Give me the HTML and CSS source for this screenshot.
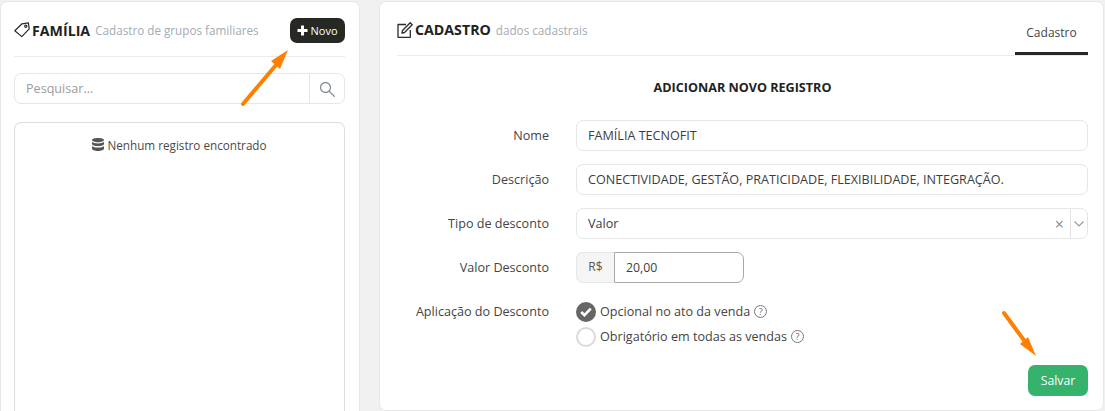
FILE: index.html
```html
<!DOCTYPE html>
<html lang="en">
<head>
    <meta charset="UTF-8">
    <meta name="viewport" content="width=device-width, initial-scale=1.0">
    <title>Cadastro de Família</title>
    <link rel="stylesheet" href="styles.css">
</head>
<body>
    <div class="page">
        <section class="card card-left">
            <header class="card-head">
                <svg class="head-icon tag-icon" width="16" height="16" viewBox="0 0 16 16" fill="none" stroke="#2a2a2a" stroke-width="1.200" stroke-linejoin="round"><path d="M.8 8.800 8 1.800l6.400-1 .8 6L7.800 14.600z"/><circle cx="11.800" cy="4.200" r="1.100"/></svg>
                <h1 class="head-title">FAMÍLIA</h1>
                <span class="head-sub">Cadastro de grupos familiares</span>
                <button class="btn-new" type="button">
                    <svg width="11" height="11" viewBox="0 0 11 11" fill="#fff"><path d="M4 .5h3V4h3.500v3H7v3.500H4V7H.5V4H4z"/></svg>
                    Novo
                </button>
            </header>
            <div class="search">
                <span class="search-text">Pesquisar...</span>
                <span class="search-btn">
                    <svg width="16" height="16" viewBox="0 0 16 16" fill="none" stroke="#8a8f94" stroke-width="1.300"><circle cx="6.500" cy="6.500" r="5"/><path d="m10.200 10.200 5 5" stroke-linecap="round"/></svg>
                </span>
            </div>
            <div class="list-box">
                <p class="empty">
                    <svg width="12" height="14" viewBox="0 0 12 14" fill="#555"><path d="M6 0c3.300 0 6 .9 6 2s-2.700 2.200-6 2.200S0 3.100 0 2s2.700-2 6-2z"/><path d="M0 3.800C1 5 3.500 5.500 6 5.500s5-.5 6-1.700V6c0 1.100-2.700 2.100-6 2.100S0 7.100 0 6z"/><path d="M0 8C1 9.100 3.500 9.600 6 9.600S11 9.100 12 8v2.800c0 1.200-2.700 2.200-6 2.200s-6-1-6-2.200z"/></svg>
                    Nenhum registro encontrado
                </p>
            </div>
        </section>

        <section class="card card-right">
            <header class="card-head card-head-tabs">
                <svg class="head-icon" width="16" height="16" viewBox="0 0 16 16" fill="none" stroke="#2a2a2a" stroke-width="1.300" stroke-linejoin="round"><path d="M9 2.500H1v12.800h12.300V8"/><path d="m5.500 8.500 7.700-7.700 2 2-7.700 7.700-2.500.5z"/></svg>
                <h2 class="head-title">CADASTRO</h2>
                <span class="head-sub">dados cadastrais</span>
                <span class="tab">Cadastro</span>
            </header>
            <h3 class="form-title">ADICIONAR NOVO REGISTRO</h3>
            <form class="form">
                <label class="form-label">Nome</label>
                <div class="field">FAMÍLIA TECNOFIT</div>

                <label class="form-label">Descrição</label>
                <div class="field">CONECTIVIDADE, GESTÃO, PRATICIDADE, FLEXIBILIDADE, INTEGRAÇÃO.</div>

                <label class="form-label">Tipo de desconto</label>
                <div class="field field-select">
                    <span class="select-value">Valor</span>
                    <span class="select-clear">×</span>
                    <span class="select-arrow">
                        <svg width="10" height="6" viewBox="0 0 10 6" fill="none" stroke="#999" stroke-width="1.200"><path d="m.5.500 4.500 4.500L9.500.5"/></svg>
                    </span>
                </div>

                <label class="form-label">Valor Desconto</label>
                <div class="money">
                    <span class="money-prefix">R$</span>
                    <span class="money-input">20,00</span>
                </div>

                <label class="form-label">Aplicação do Desconto</label>
                <div class="radios">
                    <div class="radio-row">
                        <span class="radio radio-on">
                            <svg width="12" height="10" viewBox="0 0 12 10" fill="none" stroke="#fff" stroke-width="2.600"><path d="m1.200 5 3.200 3.200 6.400-6.600"/></svg>
                        </span>
                        Opcional no ato da venda
                        <span class="help">?</span>
                    </div>
                    <div class="radio-row">
                        <span class="radio"></span>
                        Obrigatório em todas as vendas
                        <span class="help">?</span>
                    </div>
                </div>
            </form>
            <div class="actions">
                <button class="btn-save" type="button">Salvar</button>
            </div>
        </section>
    </div>

    <!-- setas de anotação sobre o print -->
    <svg class="arrow arrow-new" width="52" height="60" viewBox="0 0 52 60" fill="none">
        <path d="M4 55 37 16" stroke="#ff8000" stroke-width="4" stroke-linecap="round"/>
        <path d="M49 1 41 20 32 12z" fill="#ff8000"/>
    </svg>
    <svg class="arrow arrow-save" width="38" height="50" viewBox="0 0 38 50" fill="none">
        <path d="M2 4 24 34" stroke="#ff8000" stroke-width="4" stroke-linecap="round"/>
        <path d="M34 47 18 35 26 28z" fill="#ff8000"/>
    </svg>
</body>
</html>
```

FILE: styles.css
```css
* {
    box-sizing: border-box;
}
html, body {
    height: 100%;
}
body {
    margin: 0;
    background-color: #f1f1f1;
    color: #3d3d3d;
    font-family: "Open Sans", Arial, sans-serif;
    font-size: 12.6px;
    overflow: hidden;
    position: relative;
}
.page {
    display: flex;
    gap: 19px;
    height: 411px;
    padding: 1px 1px 0 0;
}
.card {
    background-color: white;
    border: 1px solid #e6e6e6;
    border-radius: 7px;
}
.card-left {
    width: 360px;
    flex: none;
    display: flex;
    flex-direction: column;
    padding: 0 14px 0 13px;
    border-bottom: none;
    border-radius: 7px 7px 0 0;
}
.card-right {
    flex: 1;
    height: 410px;
    padding: 0 15px 0 17px;
}
.card-head {
    display: flex;
    align-items: center;
    flex: none;
    height: 55px;
    border-bottom: 1px solid #ebebeb;
    padding-top: 2px;
}
.head-icon {
    flex: none;
    margin-right: 3px;
}
.tag-icon {
    margin-right: 2px;
}
.head-title {
    margin: 0 5px 0 0;
    font-size: 14.2px;
    font-weight: 700;
    color: #222;
}
.head-sub {
    color: #a3abb3;
    font-size: 11.7px;
}
.btn-new {
    margin-left: auto;
    width: 55px;
    height: 25px;
    padding: 0;
    border: none;
    border-radius: 7px;
    background-color: #262824;
    color: white;
    font-family: inherit;
    font-size: 11px;
    display: flex;
    align-items: center;
    justify-content: center;
    gap: 2px;
}
.search {
    display: flex;
    align-items: center;
    flex: none;
    height: 31px;
    margin-top: 16px;
    border: 1px solid #e6e6e6;
    border-radius: 7px;
}
.search-text {
    flex: 1;
    padding-left: 11px;
    color: #9b9b9b;
}
.search-btn {
    width: 35px;
    height: 100%;
    border-left: 1px solid #e6e6e6;
    display: flex;
    align-items: center;
    justify-content: center;
}
.list-box {
    flex: 1;
    margin-top: 18px;
    border: 1px solid #dedede;
    border-bottom: none;
    border-radius: 7px 7px 0 0;
}
.empty {
    margin: 14px 0 0;
    text-align: center;
    color: #4a4a4a;
    font-size: 11.7px;
}
.empty svg {
    vertical-align: -2px;
}
.card-head-tabs {
    align-items: stretch;
    height: 54px;
}
.card-head-tabs .head-icon,
.card-head-tabs .head-title,
.card-head-tabs .head-sub {
    align-self: center;
}
.card-head-tabs .head-icon {
    margin-right: 2px;
}
.tab {
    margin-left: auto;
    width: 73px;
    padding-top: 20px;
    border-bottom: 3px solid #262824;
    text-align: center;
    color: #444;
    font-size: 12px;
}
.form-title {
    margin: 23px 0 0;
    text-align: center;
    font-size: 12.6px;
    font-weight: 700;
    color: #222;
    height: 17px;
    line-height: 17px;
}
.form {
    display: grid;
    grid-template-columns: 152px 1fr;
    column-gap: 27px;
    row-gap: 13px;
    margin-top: 24px;
}
.form-label {
    height: 31px;
    padding-top: 1px;
    text-align: right;
    line-height: 30px;
    color: #444;
}
.field {
    height: 31px;
    padding: 0 11px;
    border: 1px solid #e6e6e6;
    border-radius: 7px;
    line-height: 29px;
    color: #3d3d3d;
}
.field-select {
    display: flex;
    align-items: center;
    padding-right: 0;
}
.select-value {
    flex: 1;
}
.select-clear {
    color: #8a8a8a;
    font-size: 16px;
    line-height: 1;
    margin-right: 6px;
}
.select-arrow {
    width: 17px;
    height: 100%;
    border-left: 1px solid #e2e2e2;
    display: flex;
    align-items: center;
    justify-content: center;
}
.money {
    display: flex;
    width: 168px;
    height: 31px;
}
.money-prefix {
    width: 38px;
    border: 1px solid #e6e6e6;
    border-right: none;
    border-radius: 7px 0 0 7px;
    background-color: #f5f5f5;
    line-height: 27px;
    text-align: center;
    color: #555;
    font-size: 12px;
}
.money-input {
    flex: 1;
    border: 1px solid #a8a8a8;
    border-radius: 0 7px 7px 0;
    padding-left: 11px;
    line-height: 29px;
    font-size: 12.3px;
}
.radios {
    display: flex;
    flex-direction: column;
    gap: 4px;
    margin-top: 5px;
}
.radio-row {
    display: flex;
    align-items: center;
    height: 21px;
    gap: 4px;
    color: #444;
}
.radio {
    width: 20px;
    height: 20px;
    border: 2px solid #ddd9d4;
    border-radius: 50%;
    flex: none;
    display: flex;
    align-items: center;
    justify-content: center;
}
.radio-on {
    background-color: #666;
    border-color: #666;
}
.help {
    width: 13px;
    height: 13px;
    border: 1px solid #777;
    border-radius: 50%;
    font-size: 9px;
    line-height: 11px;
    text-align: center;
    color: #666;
}
.actions {
    display: flex;
    justify-content: flex-end;
    margin-top: 18px;
}
.btn-save {
    width: 60px;
    height: 31px;
    border: none;
    border-radius: 7px;
    background-color: #35b26c;
    color: white;
    font-family: inherit;
    font-size: 12.3px;
    padding: 0;
}
.arrow {
    position: absolute;
}
.arrow-new {
    left: 239px;
    top: 49px;
}
.arrow-save {
    left: 1002px;
    top: 309px;
}
```
